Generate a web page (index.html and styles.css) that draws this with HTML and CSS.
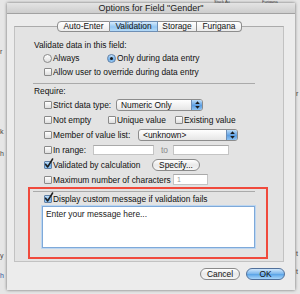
FILE: index.html
```html
<!DOCTYPE html>
<html>
<head>
<meta charset="utf-8">
<link rel="stylesheet" href="styles.css">
</head>
<body>
<div class="bgapp">
  <span class="frag top1">Stack Au</span>
  <span class="frag top2">Furigana</span>
  <span class="frag l1">r</span>
  <span class="frag l2">k</span>
  <span class="frag l3">h</span>
  <span class="frag l4">y</span>
  <span class="frag l5 blue">h</span>
  <span class="frag r1">r</span>
  <span class="frag r2">t</span>
  <span class="frag r3">t</span>
</div>
<div class="dialog">
  <div class="titlebar">Options for Field "Gender"</div>
  <div class="tabs">
    <div class="tab first w53">Auto-Enter</div>
    <div class="tab sel w48">Validation</div>
    <div class="tab w39">Storage</div>
    <div class="tab last w45">Furigana</div>
  </div>
  <div class="panel">
    <div class="row">Validate data in this field:</div>
    <div class="row r-radios">
      <span class="opt w64"><span class="radio"></span>Always</span>
      <span class="opt"><span class="radio on"><span class="dot"></span></span>Only during data entry</span>
    </div>
    <div class="row r-allow">
      <span class="cb"></span>Allow user to override during data entry
    </div>
    <div class="sep"></div>
    <div class="row r-require">Require:</div>

    <div class="row req">
      <span class="cb"></span><span class="lbl w63">Strict data type:</span>
      <span class="select w87"><span class="seltext">Numeric Only</span><span class="arrows"><svg width="5" height="8" viewBox="0 0 5 8"><path d="M2.5 0.3L4.8 3H0.2z M0.2 5h4.6L2.5 7.7z" fill="#1b1b1b"/></svg></span></span>
    </div>
    <div class="row req">
      <span class="opt w64"><span class="cb"></span>Not empty</span>
      <span class="opt w67"><span class="cb"></span>Unique value</span>
      <span class="opt"><span class="cb"></span>Existing value</span>
    </div>
    <div class="row req">
      <span class="cb"></span><span class="lbl w85">Member of value list:</span>
      <span class="select w100"><span class="seltext">&lt;unknown&gt;</span><span class="arrows"><svg width="5" height="8" viewBox="0 0 5 8"><path d="M2.5 0.3L4.8 3H0.2z M0.2 5h4.6L2.5 7.7z" fill="#1b1b1b"/></svg></span></span>
    </div>
    <div class="row req">
      <span class="cb"></span><span class="lbl w40">In range:</span>
      <span class="field w61"></span>
      <span class="to">to</span>
      <span class="field w56"></span>
    </div>
    <div class="row req">
      <span class="cb on"><svg class="tick" width="10" height="11" viewBox="0 0 10 11"><path d="M1.6 6.2 L3.6 9 L8.6 1" fill="none" stroke="#1e1e1e" stroke-width="1.5" stroke-linecap="round" stroke-linejoin="round"/></svg></span><span class="lbl w99">Validated by calculation</span>
      <span class="pill specify">Specify...</span>
    </div>
    <div class="row req">
      <span class="cb"></span><span class="lbl w120">Maximum number of characters</span>
      <span class="field w35 num">1</span>
    </div>
    <div class="sep sep2"></div>
    <div class="row r-display">
      <span class="cb on"><svg class="tick" width="10" height="11" viewBox="0 0 10 11"><path d="M1.6 6.2 L3.6 9 L8.6 1" fill="none" stroke="#1e1e1e" stroke-width="1.5" stroke-linecap="round" stroke-linejoin="round"/></svg></span>Display custom message if validation fails
    </div>
    <div class="msg">Enter your message here...</div>
    <div class="highlight"></div>
  </div>
  <div class="buttons">
    <span class="pill cancel">Cancel</span>
    <span class="pill ok">OK</span>
  </div>
</div>
</body>
</html>
```
FILE: styles.css
```css
* { box-sizing: border-box; }
html, body { margin: 0; padding: 0; }
body {
  width: 300px;
  height: 294px;
  overflow: hidden;
  position: relative;
  background: #e6e6e6;
  font-family: "Liberation Sans", Arial, sans-serif;
  font-size: 8.4px;
  color: #111;
}

/* background application window */
.bgapp { position: absolute; inset: 0; }
.frag { position: absolute; font-size: 7px; line-height: 7px; color: #444; }
.frag.blue { color: #2f4f9a; }
.top1 { left: 214px; top: 0; font-size: 4px; line-height: 4px; }
.top2 { left: 262px; top: 0; font-size: 4px; line-height: 4px; }
.l1 { left: 0; top: 48px; }
.l2 { left: 0; top: 128px; }
.l3 { left: 0; top: 150px; }
.l4 { left: 0; top: 252px; }
.l5 { left: 0; top: 272px; }
.r1 { left: 296px; top: 90px; }
.r2 { left: 296px; top: 250px; }
.r3 { left: 296px; top: 268px; }

/* dialog window */
.dialog {
  position: absolute;
  left: 7px;
  top: 3px;
  width: 288px;
  height: 287px;
  background: #ececec;
  box-shadow: 0 0 3px rgba(0,0,0,.55);
  display: flex;
  flex-direction: column;
}
.titlebar {
  height: 11px;
  font-size: 9px;
  line-height: 10px;
  text-align: center;
  color: #1a1a1a;
  background: linear-gradient(#e4e4e4, #cdcdcd);
  border-bottom: 1px solid #a2a2a2;
}

/* tabs */
.tabs {
  display: flex;
  margin: 7px 0 0 50px;
  height: 11px;
  position: relative;
  z-index: 1;
}
.tab {
  height: 11px;
  line-height: 9px;
  text-align: center;
  border: 1px solid #8d8d8d;
  border-left: none;
  background: linear-gradient(#ffffff, #ebebeb);
  color: #111;
}
.tab.first { border-left: 1px solid #8d8d8d; border-radius: 4px 0 0 4px; }
.tab.last { border-radius: 0 4px 4px 0; }
.tab.sel { background: linear-gradient(#d6ebfd, #94c7f3 55%, #b4daf8); border-color: #6f8fb4; }
.w53 { width: 53px; }
.w48 { width: 48px; }
.w39 { width: 39px; }
.w45 { width: 45px; }

/* panel */
.panel {
  position: relative;
  margin: -6px 0 0 7px;
  width: 270px;
  height: 236px;
  border: 1px solid #c2c2c2;
  border-top-color: #ababab;
  background: #e3e3e3;
  padding: 12px 0 0 19px;
}
.row {
  display: flex;
  align-items: center;
  height: 12px;
  white-space: nowrap;
}
.r-radios { margin-top: 1px; padding-left: 9px; }
.r-allow { margin-top: 2px; padding-left: 10px; }
.sep {
  margin: 5px 0 0 -1px;
  width: 222px;
  height: 1px;
  background: #aaaaaa;
}
.sep2 { margin-top: 4px; }
.r-require { margin-top: 1px; }
.req { height: 15px; padding-left: 10px; }
.r-display { margin-top: 1px; padding-left: 10px; }

.opt { display: flex; align-items: center; }
.w64 { width: 64px; }
.w67 { width: 67px; }
.lbl { display: inline-block; }
.w63 { width: 63px; }
.w85 { width: 85px; }
.w40 { width: 40px; }
.w99 { width: 99px; }
.w120 { width: 120px; }

/* checkbox / radio */
.cb {
  position: relative;
  flex: none;
  width: 8px;
  height: 8px;
  margin-right: 1px;
  border: 1px solid #8a8a8a;
  border-radius: 1px;
  background: linear-gradient(#ffffff, #dedede);
}
.cb.on {
  background: linear-gradient(#c4e1fa, #6eaeea 60%, #9ccdf5);
  border-color: #5f7fa6;
}
.tick {
  position: absolute;
  left: -1px;
  top: -4px;
  overflow: visible;
}
.radio {
  position: relative;
  flex: none;
  width: 9px;
  height: 9px;
  margin-right: 1px;
  border: 1px solid #8a8a8a;
  border-radius: 50%;
  background: linear-gradient(#ffffff, #dedede);
}
.radio.on {
  background: linear-gradient(#c4e1fa, #6eaeea 60%, #9ccdf5);
  border-color: #5f7fa6;
}
.dot {
  position: absolute;
  left: 2px;
  top: 2px;
  width: 3px;
  height: 3px;
  border-radius: 50%;
  background: #1a1a1a;
}

/* popup menus */
.select {
  display: flex;
  height: 12px;
  border: 1px solid #8c8c8c;
  border-radius: 3px;
  background: linear-gradient(#ffffff, #e6e6e6);
  overflow: hidden;
}
.w87 { width: 87px; }
.w100 { width: 100px; }
.seltext { flex: 1; padding-left: 4px; line-height: 10px; }
.arrows {
  width: 11px;
  display: flex;
  align-items: center;
  justify-content: center;
  background: linear-gradient(#bcdcf8, #5d9fe2 55%, #8dc2f2);
  border-left: 1px solid #6c8db5;
}

/* text fields */
.field {
  height: 10px;
  background: #fff;
  border: 1px solid #c4c4c4;
  border-top-color: #a9a9a9;
}
.w61 { width: 61px; }
.w56 { width: 56px; }
.w35 { width: 35px; height: 11px; }
.num { color: #9a9a9a; font-size: 7px; line-height: 9px; padding-left: 3px; }
.to { width: 19px; padding-left: 7px; color: #8a8a8a; }

/* buttons */
.pill {
  display: flex;
  align-items: center;
  justify-content: center;
  height: 12px;
  border: 1px solid #8a8a8a;
  border-radius: 6px;
  background: linear-gradient(#ffffff, #e9e9e9 50%, #f6f6f6);
  color: #111;
}
.specify { width: 48px; }
.buttons {
  display: flex;
  justify-content: flex-end;
  gap: 6px;
  margin-top: 6px;
  padding-right: 10px;
}
.cancel { width: 40px; }
.ok {
  width: 39px;
  border-color: #51709a;
  background: linear-gradient(#cfe6fb, #78b5ec 50%, #5ea6e8 55%, #a9d6fa);
}

/* message box */
.msg {
  margin: 1px 0 0 8px;
  width: 213px;
  height: 42px;
  background: #fff;
  border: 1px solid #7ea9d9;
  box-shadow: 0 0 0 1px #bcd6f1;
  padding: 2px 0 0 3px;
  color: #222;
  line-height: 10px;
}

/* red annotation rectangle */
.highlight {
  position: absolute;
  left: 13px;
  top: 160px;
  width: 240px;
  height: 72px;
  border: 2px solid #f04a3c;
  pointer-events: none;
}
```
